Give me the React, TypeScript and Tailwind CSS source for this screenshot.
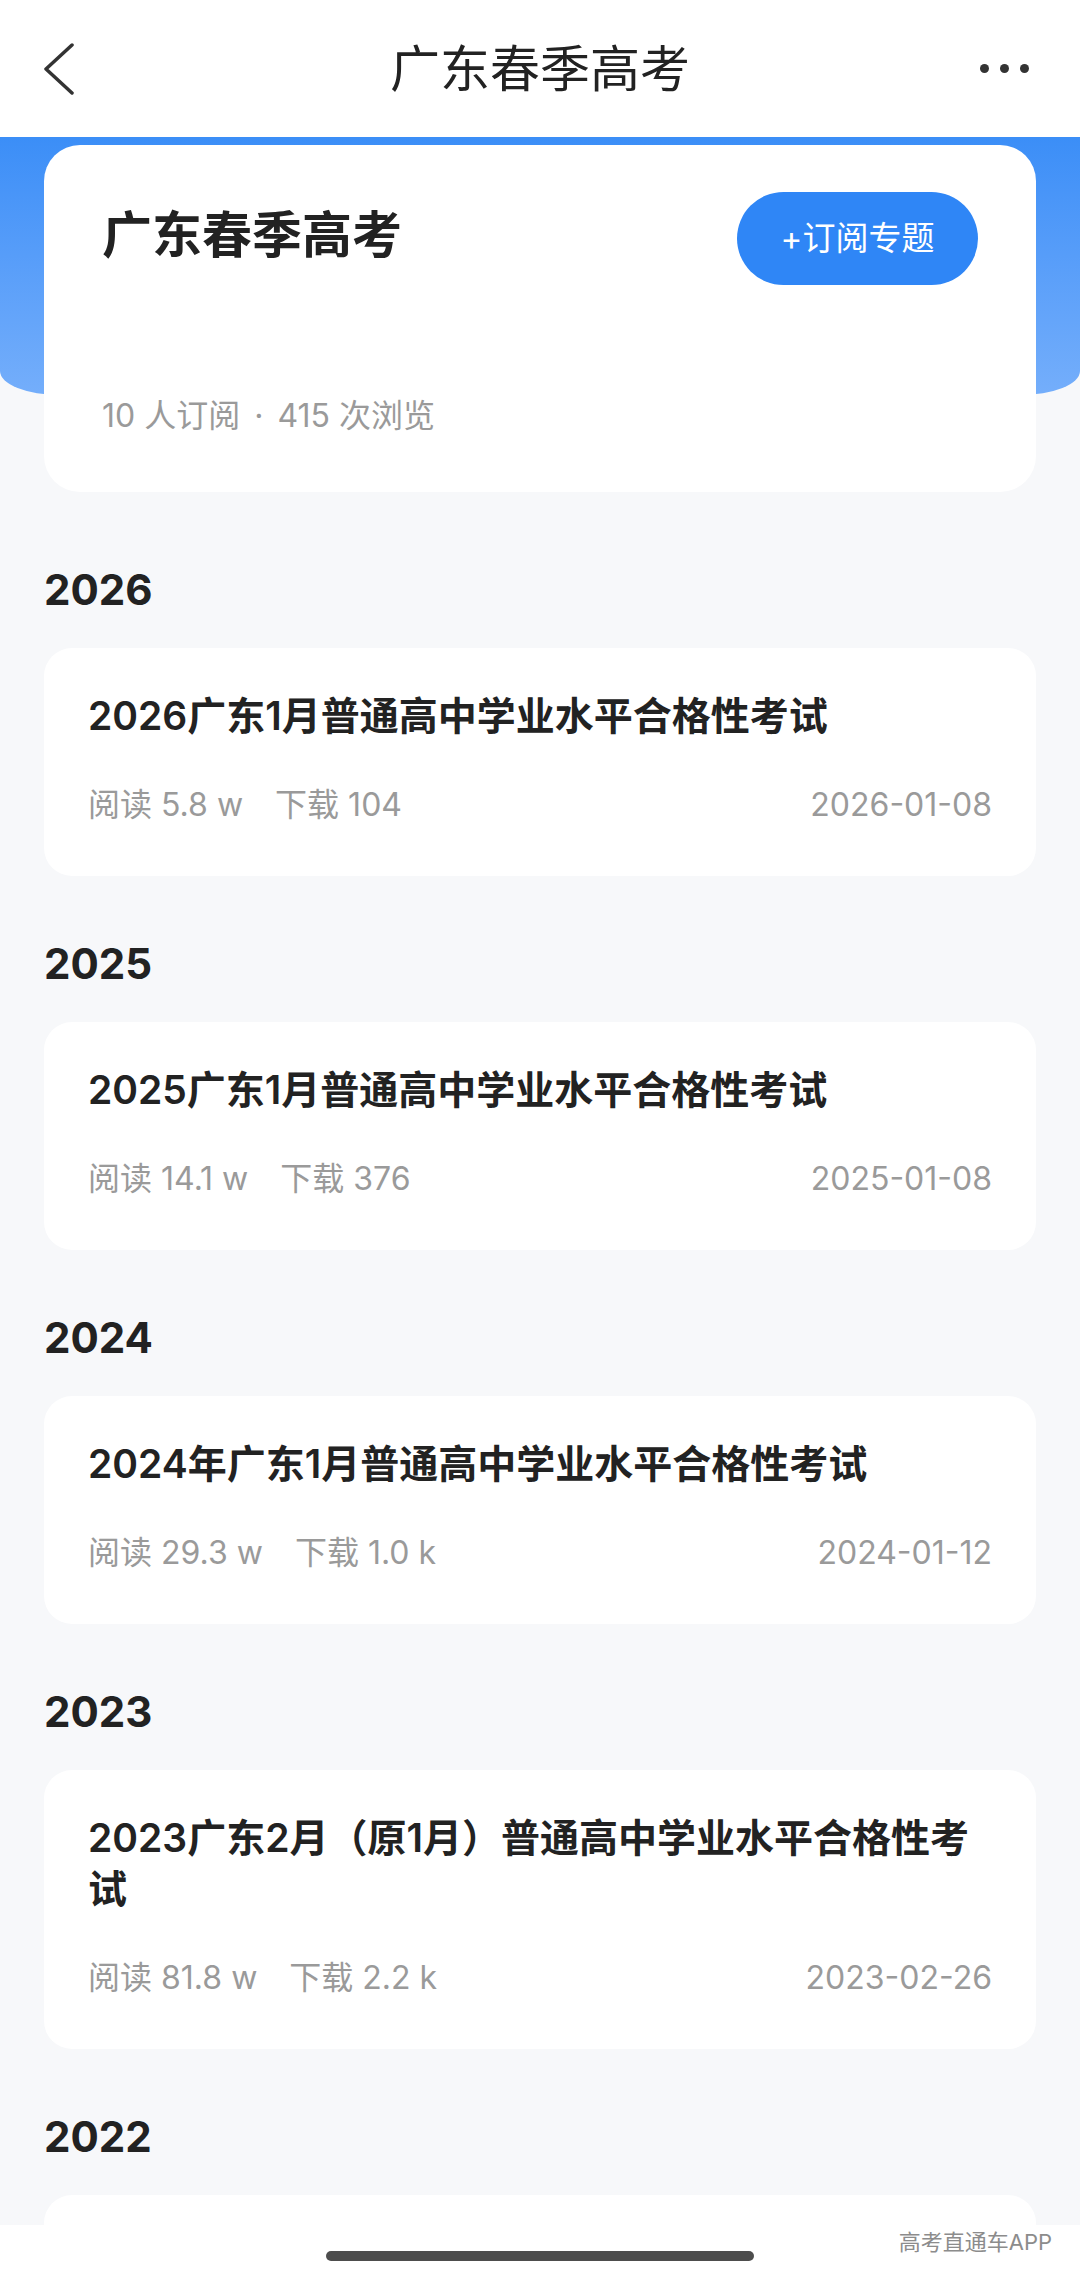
import { ReactNode } from "react";

type Paper = {
  year: string;
  title: string;
  reads: string;
  downloads: string;
  date: string;
};

const papers: Paper[] = [
  { year: "2026", title: "2026广东1月普通高中学业水平合格性考试", reads: "5.8 w", downloads: "104", date: "2026-01-08" },
  { year: "2025", title: "2025广东1月普通高中学业水平合格性考试", reads: "14.1 w", downloads: "376", date: "2025-01-08" },
  { year: "2024", title: "2024年广东1月普通高中学业水平合格性考试", reads: "29.3 w", downloads: "1.0 k", date: "2024-01-12" },
  { year: "2023", title: "2023广东2月（原1月）普通高中学业水平合格性考试", reads: "81.8 w", downloads: "2.2 k", date: "2023-02-26" },
];

function Section({ year, first, children }: { year: string; first?: boolean; children: ReactNode }) {
  return (
    <section className={first ? "pt-[68px]" : "pt-[58px]"}>
      <h2 className="px-[44px] h-[60px] text-[42px] leading-[60px] font-bold text-[#222]">{year}</h2>
      <div className="mt-[28px]">{children}</div>
    </section>
  );
}

function PaperCard({ paper }: { paper: Paper }) {
  return (
    <div className="mx-[44px] rounded-[28px] bg-white px-[44px] pt-[42px] pb-[49px]">
      <h3 className="text-[39px] leading-[51px] font-semibold text-[#222]">{paper.title}</h3>
      <div className="mt-[42px] h-[44px] flex items-center justify-between text-[32px] leading-[44px] text-[#9a9a9a]">
        <div className="flex items-center">
          <span>阅读 {paper.reads}</span>
          <span className="ml-[32px]">下载 {paper.downloads}</span>
        </div>
        <span>{paper.date}</span>
      </div>
    </div>
  );
}

export default function App() {
  return (
    <div className="h-[2282px] w-[1080px] flex flex-col overflow-hidden bg-[#f7f8fa] font-['Inter','Noto_Sans_CJK_SC',sans-serif]">
      {/* Nav bar */}
      <header className="h-[137px] shrink-0 bg-white grid grid-cols-[1fr_auto_1fr] items-center">
        <div className="pl-[44px] flex items-center">
          <svg width="30" height="52" viewBox="0 0 30 52" fill="none">
            <path d="M28 2 L2 26 L28 50" stroke="#333" strokeWidth="3.5" strokeLinecap="round" strokeLinejoin="round" />
          </svg>
        </div>
        <h1 className="text-[50px] leading-[70px] text-[#222]">广东春季高考</h1>
        <div className="pr-[51px] flex items-center justify-end gap-[11px]">
          <span className="w-[9px] h-[9px] rounded-full bg-[#333]" />
          <span className="w-[9px] h-[9px] rounded-full bg-[#333]" />
          <span className="w-[9px] h-[9px] rounded-full bg-[#333]" />
        </div>
      </header>

      <main className="flex-1 overflow-hidden">
        {/* Blue band + topic card */}
        <div className="h-[258px] bg-gradient-to-b from-[#3b8ef7] to-[#74aefb] rounded-b-[60px_24px]" />
        <div className="relative -mt-[250px] mx-[44px] rounded-[36px] bg-white px-[58px] pt-[47px] pb-[54px]">
          <div className="flex items-start justify-between">
            <h2 className="mt-[8px] text-[50px] leading-[70px] font-bold text-[#222]">广东春季高考</h2>
            <button className="h-[93px] w-[241px] rounded-full bg-[#2f86f6] text-white text-[33px] flex items-center justify-center">
              +订阅专题
            </button>
          </div>
          <p className="mt-[109px] flex items-center text-[32px] leading-[44px] text-[#9a9a9a]">
            <span>10 人订阅</span>
            <span className="mx-[14px]">·</span>
            <span>415 次浏览</span>
          </p>
        </div>

        {papers.map((p, i) => (
          <Section key={p.year} year={p.year} first={i === 0}>
            <PaperCard paper={p} />
          </Section>
        ))}

        {/* 2022 — card is cut off by the bottom bar */}
        <Section year="2022">
          <div className="mx-[44px] h-[228px] rounded-[28px] bg-white" />
        </Section>
      </main>

      {/* Bottom gesture area */}
      <footer className="relative h-[57px] shrink-0 bg-white">
        <div className="mx-auto mt-[26px] w-[428px] h-[10px] rounded-full bg-[#4d4d4d]" />
        <span className="absolute right-[28px] top-[2px] text-[22px] leading-[30px] text-[#8c8c8c]">高考直通车APP</span>
      </footer>
    </div>
  );
}
